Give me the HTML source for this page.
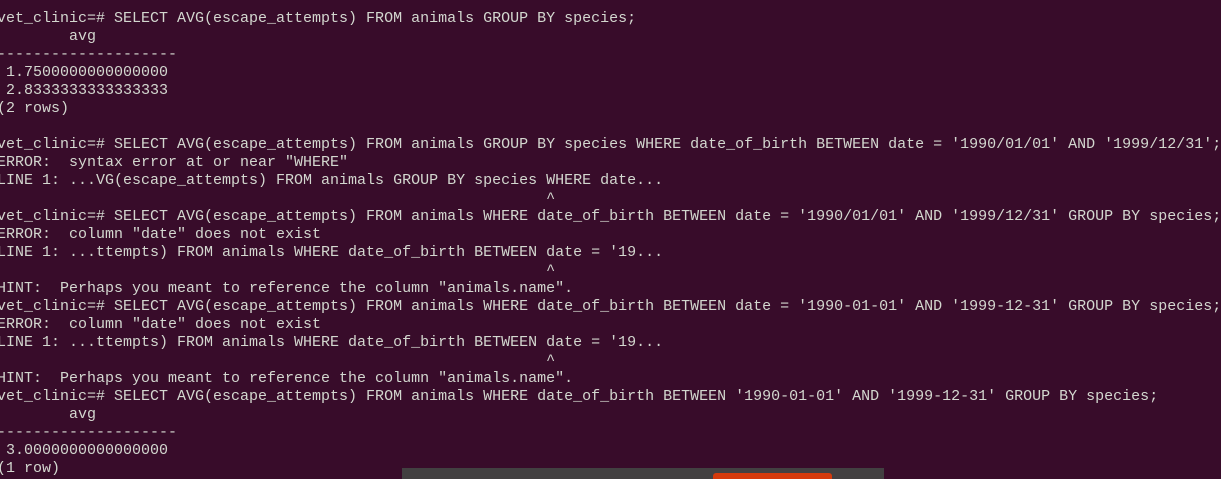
<!DOCTYPE html>
<html><head><style>
html,body{margin:0;padding:0;width:1221px;height:479px;overflow:hidden;background:#380c2a;}
pre{position:absolute;left:-3px;top:10px;margin:0;font-family:"Liberation Mono",monospace;font-size:15px;line-height:18px;color:#d3d7cf;white-space:pre;}
.bar{position:absolute;left:402px;top:468px;width:482px;height:11px;background:#424041;}
.btn{position:absolute;left:713px;top:473px;width:119px;height:6px;background:#d43a0c;border-radius:3px 3px 0 0;}
</style></head><body>
<pre>vet_clinic=# SELECT AVG(escape_attempts) FROM animals GROUP BY species;
        avg
--------------------
 1.7500000000000000
 2.8333333333333333
(2 rows)

vet_clinic=# SELECT AVG(escape_attempts) FROM animals GROUP BY species WHERE date_of_birth BETWEEN date = '1990/01/01' AND '1999/12/31';
ERROR:  syntax error at or near "WHERE"
LINE 1: ...VG(escape_attempts) FROM animals GROUP BY species WHERE date...
                                                             ^
vet_clinic=# SELECT AVG(escape_attempts) FROM animals WHERE date_of_birth BETWEEN date = '1990/01/01' AND '1999/12/31' GROUP BY species;
ERROR:  column "date" does not exist
LINE 1: ...ttempts) FROM animals WHERE date_of_birth BETWEEN date = '19...
                                                             ^
HINT:  Perhaps you meant to reference the column "animals.name".
vet_clinic=# SELECT AVG(escape_attempts) FROM animals WHERE date_of_birth BETWEEN date = '1990-01-01' AND '1999-12-31' GROUP BY species;
ERROR:  column "date" does not exist
LINE 1: ...ttempts) FROM animals WHERE date_of_birth BETWEEN date = '19...
                                                             ^
HINT:  Perhaps you meant to reference the column "animals.name".
vet_clinic=# SELECT AVG(escape_attempts) FROM animals WHERE date_of_birth BETWEEN '1990-01-01' AND '1999-12-31' GROUP BY species;
        avg
--------------------
 3.0000000000000000
(1 row)</pre>
<div class="bar"></div><div class="btn"></div>
</body></html>
